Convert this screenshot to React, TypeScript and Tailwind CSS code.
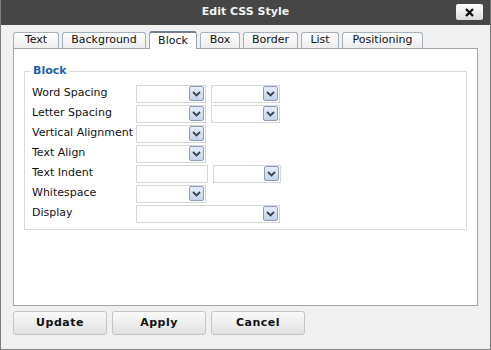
import React from "react";

const font = { fontFamily: '"DejaVu Sans", Verdana, sans-serif' };

function Arrow() {
  return (
    <div className="w-[15px] h-[15px] border border-[#8b9db6] rounded-[2px] bg-gradient-to-b from-[#e6eef9] to-[#c5d4ea] flex items-center justify-center">
      <svg width="9" height="6" viewBox="0 0 9 6">
        <path d="M1 1 L4.5 4.5 L8 1" stroke="#39424e" strokeWidth="1.8" fill="none" />
      </svg>
    </div>
  );
}

function Select({ w }: { w: number }) {
  return (
    <div
      className="h-[18px] border border-[#d6d6d6] bg-white flex items-center justify-end pr-[1px]"
      style={{ width: w }}
    >
      <Arrow />
    </div>
  );
}

function Input({ w }: { w: number }) {
  return <div className="h-[18px] border border-[#d6d6d6] bg-white" style={{ width: w }} />;
}

const rows: { label: string; c: React.ReactNode }[] = [
  { label: "Word Spacing", c: <><Select w={70} /><Select w={69} /></> },
  { label: "Letter Spacing", c: <><Select w={70} /><Select w={69} /></> },
  { label: "Vertical Alignment", c: <Select w={70} /> },
  { label: "Text Align", c: <Select w={70} /> },
  { label: "Text Indent", c: <><Input w={72} /><Select w={68} /></> },
  { label: "Whitespace", c: <Select w={70} /> },
  { label: "Display", c: <Select w={144} /> },
];

const tabs = [
  { t: "Text", w: 46 },
  { t: "Background", w: 84 },
  { t: "Block", w: 48 },
  { t: "Box", w: 40 },
  { t: "Border", w: 55 },
  { t: "List", w: 38 },
  { t: "Positioning", w: 81 },
];

export default function App() {
  return (
    <div className="w-[491px] h-[350px] bg-[#f0f0f0] border-x border-b border-[#7c7c7c] flex flex-col text-[11px] text-[#111]" style={font}>
      <div className="h-[25px] bg-[#464646] flex items-center justify-center relative shrink-0">
        <span className="text-[#f2f2f2] font-bold text-[11px]">Edit CSS Style</span>
        <div className="absolute right-[7px] top-[4px] w-[27px] h-[16px] rounded-[2px] bg-gradient-to-b from-white to-[#dcdcdc] flex items-center justify-center">
          <svg width="9" height="9" viewBox="0 0 9 9">
            <path d="M1 1 L8 8 M8 1 L1 8" stroke="#111" strokeWidth="2.4" />
          </svg>
        </div>
      </div>

      <div className="flex items-end gap-[3px] pl-[12px] pt-[6px] h-[23px] shrink-0">
        {tabs.map(({ t, w }) => {
          const active = t === "Block";
          return (
            <div
              key={t}
              style={{ width: w }}
              className={
                active
                  ? "h-[18px] bg-white border border-b-0 border-[#9aa5b1] border-t-2 border-t-[#6f7f91] rounded-t-[3px] flex items-center justify-center relative top-[1px] z-10 whitespace-nowrap"
                  : "h-[16px] bg-gradient-to-b from-white to-[#ececec] border border-b-0 border-[#a4b0bc] rounded-t-[3px] flex items-center justify-center whitespace-nowrap"
              }
            >
              {t}
            </div>
          );
        })}
      </div>

      <div className="mx-[12px] h-[258px] bg-white border border-[#a0a7ae] shrink-0 pt-[14px] px-[10px]">
        <fieldset className="border border-[#dadada] pl-[7px] pr-[8px] pb-[5px] pt-[4px]">
          <legend className="px-[2px] text-[#1d5fa6] font-bold -ml-[1px]">Block</legend>
          <div className="flex flex-col">
            {rows.map((r) => (
              <div key={r.label} className="h-[20px] flex items-center">
                <div className="w-[104px] shrink-0 whitespace-nowrap">{r.label}</div>
                <div className="flex gap-[5px] items-center">{r.c}</div>
              </div>
            ))}
          </div>
        </fieldset>
      </div>

      <div className="flex gap-[5px] pl-[12px] pt-[5px]">
        {["Update", "Apply", "Cancel"].map((b) => (
          <div
            key={b}
            className="w-[94px] h-[24px] rounded-[3px] border border-[#c4c4c4] bg-gradient-to-b from-[#fafafa] to-[#e2e2e2] flex items-center justify-center font-bold tracking-[0.5px]"
          >
            {b}
          </div>
        ))}
      </div>
    </div>
  );
}
